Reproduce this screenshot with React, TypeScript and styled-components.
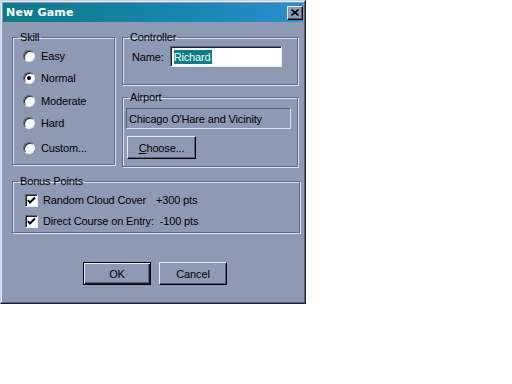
import React, { FC } from 'react';
import styled, { createGlobalStyle } from 'styled-components';

const GlobalStyle = createGlobalStyle`
	html, body {
		margin: 0;
		padding: 0;
		background: #fff;
	}
	body {
		font-family: 'Liberation Sans', Arial, sans-serif;
		font-size: 11px;
		letter-spacing: -0.15px;
	}
`;

const Window = styled.div`
	width: 306px;
	height: 304px;
	box-sizing: border-box;
	background-color: #8e9ab4;
	border: 1px solid #c8d2e6;
	border-right-color: #1c2230;
	border-bottom-color: #1c2230;
	box-shadow: inset -1px -1px 0 #566078, inset 1px 1px 0 #e4ecf8;
	padding: 2px;
	display: flex;
	flex-direction: column;
	color: #000;
`;

const TitleBar = styled.div`
	height: 19px;
	display: flex;
	align-items: center;
	justify-content: space-between;
	padding: 0 0 0 3px;
	background: linear-gradient(90deg, #0c7a86 0%, #1484a8 50%, #2a8ed0 100%);
	color: #fff;
	font-family: 'DejaVu Sans', Verdana, sans-serif;
	font-weight: bold;
	font-size: 11px;
	letter-spacing: 0.2px;
`;

const CloseButton = styled.div`
	width: 16px;
	height: 14px;
	box-sizing: border-box;
	background: #8e9ab4;
	border: 1px solid #e4ecf8;
	border-right-color: #000;
	border-bottom-color: #000;
	box-shadow: inset -1px -1px 0 #566078;
	display: flex;
	align-items: center;
	justify-content: center;
`;

const Body = styled.div`
	flex: 1;
	display: flex;
	flex-direction: column;
	padding: 9px 5px 0 9px;
`;

const TopRow = styled.div`
	display: flex;
	gap: 7px;
	align-items: flex-start;
`;

const RightCol = styled.div`
	display: flex;
	flex-direction: column;
	gap: 6px;
`;

const Group = styled.fieldset<{ $w: number; $h: number }>`
	width: ${(p) => p.$w}px;
	height: ${(p) => p.$h}px;
	box-sizing: border-box;
	margin: 0;
	padding: 0;
	min-width: 0;
	border: 1px solid #5e6a84;
	box-shadow: 1px 1px 0 #dbe4f4, inset 1px 1px 0 #dbe4f4;

	legend {
		padding: 0 2px;
		margin-left: 5px;
		line-height: 12px;
		font-size: 11px;
	}
`;

const RadioList = styled.div`
	display: flex;
	flex-direction: column;
	padding: 5px 0 0 10px;
`;

const RadioRow = styled.div<{ $gap: number }>`
	display: flex;
	align-items: center;
	gap: 6px;
	height: 16px;
	margin-bottom: ${(p) => p.$gap}px;
`;

const RadioDot = styled.span<{ $on?: boolean }>`
	width: 12px;
	height: 12px;
	box-sizing: border-box;
	border-radius: 50%;
	background: #fff;
	border: 1px solid #566078;
	border-right-color: #e4ecf8;
	border-bottom-color: #e4ecf8;
	box-shadow: inset 1px 1px 0 #1c2230;
	display: flex;
	align-items: center;
	justify-content: center;

	&::after {
		content: '';
		width: 4px;
		height: 4px;
		border-radius: 50%;
		background: ${(p) => (p.$on ? '#000' : 'transparent')};
	}
`;

const NameRow = styled.div`
	display: flex;
	align-items: center;
	gap: 6px;
	padding: 3px 0 0 9px;
`;

const TextInput = styled.div`
	width: 112px;
	height: 21px;
	box-sizing: border-box;
	background: #fff;
	border: 1px solid #566078;
	border-right-color: #e4ecf8;
	border-bottom-color: #e4ecf8;
	box-shadow: inset 1px 1px 0 #1c2230;
	display: flex;
	align-items: center;
	padding-left: 3px;

	span {
		background: #0a7c84;
		color: #fff;
		padding: 1px 1px 1px 0;
	}
`;

const ReadOnlyField = styled.div`
	height: 21px;
	box-sizing: border-box;
	margin: 5px 6px 0 3px;
	border: 1px solid #566078;
	border-right-color: #dbe4f4;
	border-bottom-color: #dbe4f4;
	display: flex;
	align-items: center;
	padding-left: 2px;
`;

const Button = styled.div<{ $default?: boolean; $w: number }>`
	width: ${(p) => p.$w}px;
	height: 23px;
	box-sizing: border-box;
	display: flex;
	align-items: center;
	justify-content: center;
	background: #8e9ab4;
	border: 1px solid ${(p) => (p.$default ? '#000' : '#e4ecf8')};
	border-right-color: #000;
	border-bottom-color: #000;
	box-shadow: ${(p) =>
		p.$default
			? 'inset 1px 1px 0 #e4ecf8, inset -1px -1px 0 #1c2230, inset -2px -2px 0 #566078'
			: 'inset -1px -1px 0 #566078'};

	u {
		text-decoration: underline;
	}
`;

const ChooseWrap = styled.div`
	padding: 7px 0 0 4px;
`;

const CheckList = styled.div`
	display: flex;
	flex-direction: column;
	gap: 5px;
	padding: 5px 0 0 12px;
`;

const CheckRow = styled.div`
	display: flex;
	align-items: center;
	gap: 5px;
	height: 16px;
`;

const CheckBox = styled.span`
	width: 13px;
	height: 13px;
	box-sizing: border-box;
	background: #fff;
	border: 1px solid #566078;
	border-right-color: #e4ecf8;
	border-bottom-color: #e4ecf8;
	box-shadow: inset 1px 1px 0 #1c2230;
	display: flex;
	align-items: center;
	justify-content: center;
`;

const Pts = styled.span<{ $x: number }>`
	display: inline-block;
	width: ${(p) => p.$x}px;
`;

const ButtonRow = styled.div`
	display: flex;
	gap: 8px;
	padding: 29px 0 0 71px;
`;

const Check: FC = () => (
	<CheckBox>
		<svg width="9" height="9" viewBox="0 0 9 9">
			<path d="M1 4 L3 6.5 L8 1.5" stroke="#000" strokeWidth="2" fill="none" />
		</svg>
	</CheckBox>
);

const skills = [
	{ label: 'Easy', on: false, gap: 6 },
	{ label: 'Normal', on: true, gap: 7 },
	{ label: 'Moderate', on: false, gap: 6 },
	{ label: 'Hard', on: false, gap: 9 },
	{ label: 'Custom...', on: false, gap: 0 },
];

const App: FC = () => (
	<>
		<GlobalStyle />
		<Window>
			<TitleBar>
				<span>New Game</span>
				<CloseButton>
					<svg width="8" height="7" viewBox="0 0 8 7">
						<path d="M0.5 0.5 L7.5 6.5 M7.5 0.5 L0.5 6.5" stroke="#000" strokeWidth="1.6" />
					</svg>
				</CloseButton>
			</TitleBar>
			<Body>
				<TopRow>
					<Group $w={104} $h={134}>
						<legend>Skill</legend>
						<RadioList>
							{skills.map((s) => (
								<RadioRow key={s.label} $gap={s.gap}>
									<RadioDot $on={s.on} />
									{s.label}
								</RadioRow>
							))}
						</RadioList>
					</Group>
					<RightCol>
						<Group $w={176} $h={54}>
							<legend>Controller</legend>
							<NameRow>
								Name:
								<TextInput>
									<span>Richard</span>
								</TextInput>
							</NameRow>
						</Group>
						<Group $w={176} $h={76}>
							<legend>Airport</legend>
							<ReadOnlyField>Chicago O'Hare and Vicinity</ReadOnlyField>
							<ChooseWrap>
								<Button $w={69}>
									<span>
										<u>C</u>hoose...
									</span>
								</Button>
							</ChooseWrap>
						</Group>
					</RightCol>
				</TopRow>
				<Group $w={288} $h={58} style={{ marginTop: 8 }}>
					<legend>Bonus Points</legend>
					<CheckList>
						<CheckRow>
							<Check />
							<span>
								<Pts $x={113}>Random Cloud Cover</Pts>+300 pts
							</span>
						</CheckRow>
						<CheckRow>
							<Check />
							<span>Direct Course on Entry:&nbsp; -100 pts</span>
						</CheckRow>
					</CheckList>
				</Group>
				<ButtonRow>
					<Button $default $w={68}>OK</Button>
					<Button $w={68}>Cancel</Button>
				</ButtonRow>
			</Body>
		</Window>
	</>
);

export default App;
